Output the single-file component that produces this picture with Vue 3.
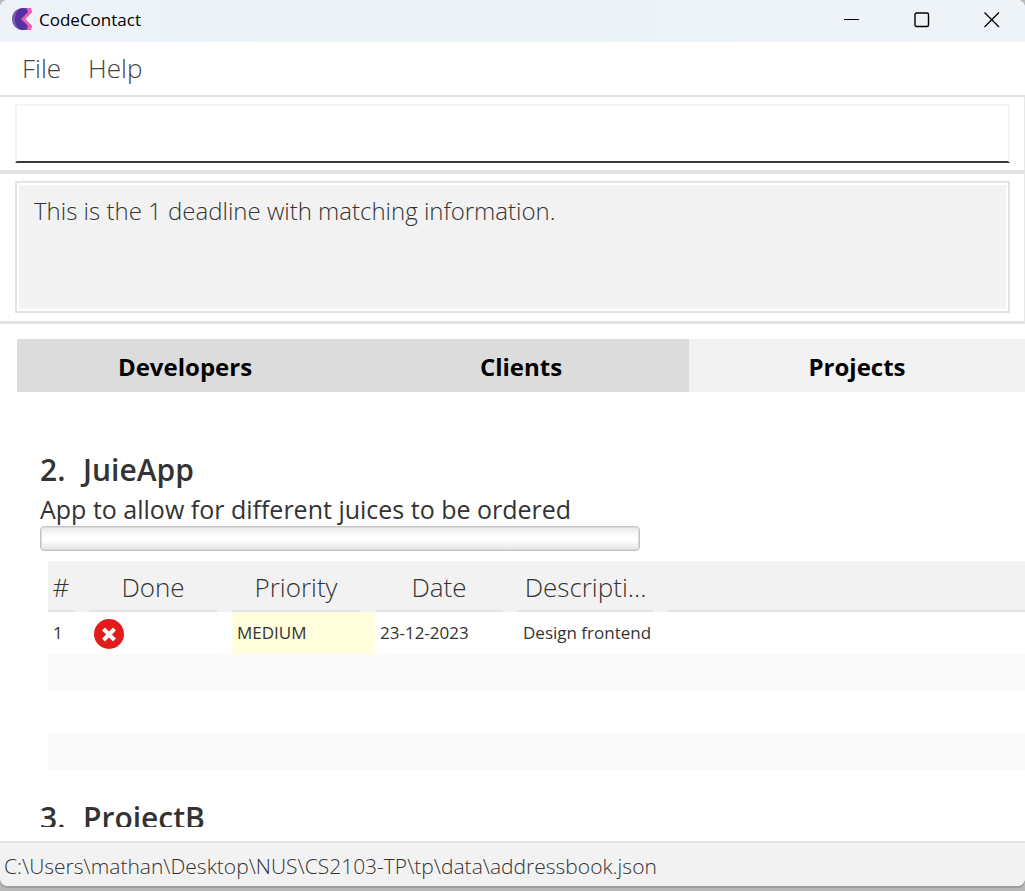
<script setup>
import { ref } from 'vue'

const command = ref('')
const result = 'This is the 1 deadline with matching information.'
const tabs = ['Developers', 'Clients', 'Projects']
const active = ref('Projects')
const columns = [
  { label: '#', cls: 'c-num' },
  { label: 'Done', cls: 'c-mid' },
  { label: 'Priority', cls: 'c-mid' },
  { label: 'Date', cls: 'c-mid' },
  { label: 'Descripti...', cls: 'c-desc' },
  { label: '', cls: 'c-rest' },
]
</script>

<template>
  <div class="desktop">
    <div class="window">
      <header class="titlebar">
        <svg class="logo" width="22" height="24" viewBox="0 0 22 24" aria-hidden="true">
          <path d="M12 1C5 1 1 6 1 12s4 11 11 11h7l2-4-7-7 7-7-2-4z" fill="#7c5fae" />
          <path d="M12 1C7 1 4 6 4 12s3 11 8 11l4-1 3-3-8-7 8-7-3-3z" fill="#5630a2" />
          <path d="M16 1h4l1 4-7 7 7 7-1 4h-3l-1-3 1-1-7-7 7-7-1-2z" fill="#f25cb0" />
        </svg>
        <span class="app-name">CodeContact</span>
        <div class="controls">
          <button type="button" aria-label="Minimize">
            <svg width="16" height="16" viewBox="0 0 16 16"><path d="M0 7.500H15" stroke="#000" fill="none" /></svg>
          </button>
          <button type="button" aria-label="Maximize">
            <svg width="16" height="16" viewBox="0 0 16 16"><rect x="1" y="1" width="13.500" height="13.500" rx="1.500" stroke="#000" stroke-width="1.400" fill="none" /></svg>
          </button>
          <button type="button" aria-label="Close">
            <svg width="16" height="16" viewBox="0 0 16 16"><path d="M.5 .5l14.500 14.500M15 .5L.5 15" stroke="#000" stroke-width="1.300" fill="none" /></svg>
          </button>
        </div>
      </header>

      <nav class="menubar">
        <button type="button">File</button>
        <button type="button">Help</button>
      </nav>

      <section class="command">
        <input v-model="command" type="text" aria-label="Command" />
      </section>

      <section class="result">
        <textarea readonly aria-label="Result" :value="result"></textarea>
      </section>

      <main class="content">
        <div class="tabs">
          <button
            v-for="t in tabs"
            :key="t"
            type="button"
            :class="{ active: t === active }"
            @click="active = t"
          >{{ t }}</button>
        </div>

        <div class="list">
          <article class="project">
            <h2><span class="index">2.</span>JuieApp</h2>
            <p>App to allow for different juices to be ordered</p>
            <progress value="0" max="1" aria-label="Progress"></progress>
            <table>
              <thead>
                <tr>
                  <th v-for="(c, i) in columns" :key="i" :class="c.cls">
                    <div>{{ c.label }}</div>
                  </th>
                </tr>
              </thead>
              <tbody>
                <tr class="task">
                  <td>1</td>
                  <td>
                    <svg class="cross" width="30" height="30" viewBox="0 0 30 30" role="img" aria-label="Not done">
                      <circle cx="15" cy="15" r="15" fill="#e21b1b" />
                      <path d="M9.500 10l11 11M20.500 10l-11 11" stroke="#fff" stroke-width="4" />
                    </svg>
                  </td>
                  <td class="medium">MEDIUM</td>
                  <td>23-12-2023</td>
                  <td>Design frontend</td>
                  <td></td>
                </tr>
                <tr class="odd"><td colspan="6"></td></tr>
                <tr><td colspan="6"></td></tr>
                <tr class="odd"><td colspan="6"></td></tr>
              </tbody>
            </table>
          </article>
          <article class="project">
            <h2><span class="index">3.</span>ProjectB</h2>
          </article>
        </div>
      </main>

      <footer class="status">C:\Users\mathan\Desktop\NUS\CS2103-TP\tp\data\addressbook.json</footer>
    </div>
  </div>
</template>

<style>
body {
  margin: 0;
}
</style>

<style scoped>
.desktop {
  box-sizing: border-box;
  height: 100vh;
  padding-bottom: 5px;
  background: #b9b9b9;
  font-family: "Open Sans", "Noto Sans", sans-serif;
  color: #333;
}
.window {
  display: flex;
  flex-direction: column;
  height: 100%;
  overflow: hidden;
  background: #fff;
  border-radius: 8px;
  box-shadow: 0 2px 1px #9c9c9c;
}
button {
  font: inherit;
  color: inherit;
  border: 0;
  padding: 0;
  background: none;
}
.titlebar {
  display: flex;
  align-items: center;
  flex: none;
  height: 42px;
  padding-left: 11px;
  box-sizing: border-box;
  background: linear-gradient(90deg, #eef3fa, #ebf3f7 30%, #eef3f8);
  color: #000;
}
.logo {
  margin-bottom: 4px;
}
.app-name {
  margin: 0 auto 3px 6px;
  font-size: 17px;
  line-height: 24px;
}
.controls {
  display: flex;
  height: 100%;
}
.controls button {
  display: flex;
  align-items: center;
  justify-content: center;
  width: 70px;
  padding: 0 0 3px 3px;
}
.menubar {
  display: flex;
  flex: none;
  gap: 27px;
  height: 53px;
  padding-left: 22px;
  border-bottom: 2px solid #e3e3e3;
  font-size: 26px;
  font-weight: 300;
  color: #444;
}
.menubar button {
  padding-bottom: 2px;
}
.command {
  flex: none;
  padding: 7px 14px 7px 15px;
  border-right: 1px solid #e8e8e8;
}
.command input {
  display: block;
  box-sizing: border-box;
  width: 100%;
  height: 59px;
  padding: 0 16px;
  border: 2px solid #f3f3f3;
  border-bottom-color: #383838;
  outline: 0;
  font: 300 24px "Open Sans", sans-serif;
}
.result {
  flex: none;
  padding: 7px 14px 8px 15px;
  border-top: 4px solid #e3e3e3;
  border-bottom: 3px solid #e3e3e3;
  border-right: 1px solid #e8e8e8;
}
.result textarea {
  display: block;
  box-sizing: border-box;
  width: 100%;
  height: 132px;
  padding: 10px 17px;
  border: 2px solid #e3e3e3;
  outline: 0;
  resize: none;
  background: #f2f2f2;
  box-shadow: inset 0 0 0 2px #fff;
  font: 300 24px/36px "Open Sans", sans-serif;
  color: #333;
}
.content {
  display: flex;
  flex-direction: column;
  flex: 1;
  min-height: 0;
  padding: 15px 0 14px 17px;
}
.tabs {
  display: flex;
  flex: none;
}
.tabs button {
  flex: 1;
  height: 53px;
  padding-top: 1px;
  background: #dcdcdc;
  font-size: 24px;
  font-weight: 700;
  color: #000;
}
.tabs button.active {
  background: #f2f2f2;
}
.list {
  flex: 1;
  min-height: 0;
  overflow: hidden;
  padding: 56px 0 0 23px;
}
.project {
  margin-bottom: 26px;
}
h2 {
  display: flex;
  margin: 0;
  font-size: 30px;
  font-weight: 600;
  line-height: 44px;
}
.index {
  width: 43px;
}
p {
  margin: 0;
  font-size: 25px;
  line-height: 34px;
}
progress {
  display: block;
  appearance: none;
  box-sizing: border-box;
  width: 600px;
  max-width: 100%;
  height: 25px;
  border: 1px solid #c4c4c4;
  border-radius: 4px;
  box-shadow: inset 0 0 0 1px #dadada;
  background: linear-gradient(#e8e8e8, #fdfdfd 40%, #fdfdfd 60%, #e4e4e4);
}
progress::-webkit-progress-bar {
  background: transparent;
}
table {
  width: calc(100% - 8px);
  margin: 10px 0 0 8px;
  table-layout: fixed;
  border-spacing: 0;
  font-size: 17px;
}
th {
  height: 51px;
  padding: 0;
  background: #f2f2f2;
  font-size: 26px;
  font-weight: 300;
}
th div {
  height: 49px;
  margin-right: 15px;
  border-bottom: 2px solid #e3e3e3;
  line-height: 52px;
  white-space: nowrap;
}
.c-num {
  width: 41px;
}
.c-mid {
  width: 143px;
}
.c-desc {
  width: 150px;
}
th.c-rest div {
  margin-right: 0;
}
td {
  height: 42px;
  padding: 0 5px;
  box-sizing: border-box;
}
.task td {
  padding-bottom: 2px;
}
.odd td {
  height: 37px;
  background: #f9f9f9;
}
.medium {
  background: #ffffde;
}
.cross {
  display: block;
  margin-top: 3px;
}
.status {
  flex: none;
  height: 45px;
  padding-left: 4px;
  box-sizing: border-box;
  border-top: 2px solid #e3e3e3;
  background: #f2f2f2;
  font-size: 21px;
  font-weight: 300;
  line-height: 46px;
}
</style>
